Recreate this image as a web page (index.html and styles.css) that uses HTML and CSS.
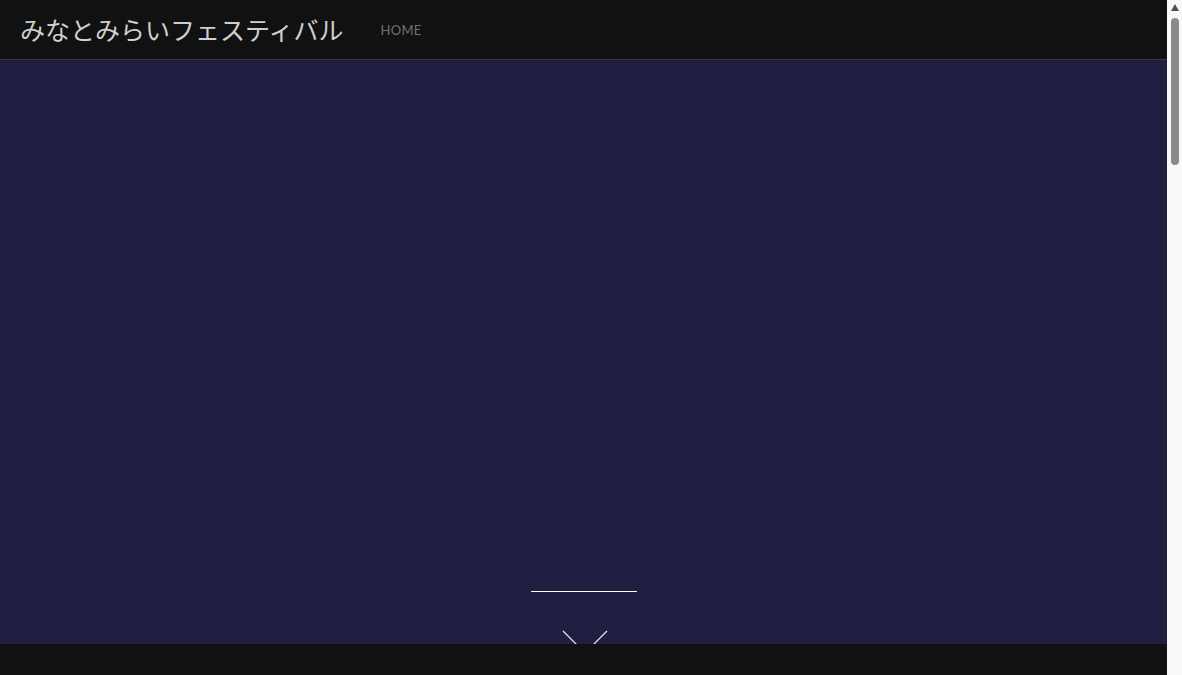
FILE: index.html
```html
<!DOCTYPE html>
<html lang="ja">
  <head>
    <meta charset="UTF-8" />
    <meta name="viewport" content="width=device-width, initial-scale=1.0" />
    <title>みなとみらいフェスティバル</title>
    <link rel="stylesheet" href="styles.css">
  </head>

  <body>
    <header class="header">
      <a class="brand" href="#">みなとみらいフェスティバル</a>
      <nav class="nav">
        <a href="#">HOME</a>
      </nav>
    </header>

    <section class="hero">
      <div class="scroll-hint">
        <div class="rule"></div>
        <svg class="chevron" width="46" height="24" viewBox="0 0 46 24">
          <polyline points="1,1 23,23 45,1" fill="none" stroke="#ececf6" stroke-width="1.2" />
        </svg>
      </div>
    </section>

    <section class="content"></section>

    <!-- window scrollbar -->
    <div class="scrollbar">
      <span class="scroll-up"></span>
      <span class="scroll-thumb"></span>
    </div>
  </body>
</html>
```

FILE: styles.css
```css
* {
  margin: 0;
  padding: 0;
  box-sizing: border-box;
}

html {
  background: #111;
}

body {
  margin-right: 15px;
  font-family: "Lato", "Noto Sans CJK JP", sans-serif;
}

a {
  text-decoration: none;
}

.header {
  height: 60px;
  display: flex;
  align-items: center;
  gap: 36px;
  padding: 0 20px;
  background: #111;
  border-bottom: 1px solid #38383d;
}

.brand {
  font-family: "Noto Sans CJK JP", sans-serif;
  font-size: 25px;
  line-height: 1;
  color: #cfcfcf;
  margin-top: -1px;
}

.nav a {
  display: block;
  margin-left: 1px;
  font-size: 13px;
  color: #727272;
  letter-spacing: 0.3px;
}

.hero {
  height: 584px;
  background: #1f1f42;
  display: flex;
  flex-direction: column;
  align-items: center;
  justify-content: flex-end;
  overflow: hidden;
}

.scroll-hint {
  display: flex;
  flex-direction: column;
  align-items: center;
  margin-bottom: -10px;
}

.rule {
  width: 106px;
  height: 1px;
  background: #fff;
}

.chevron {
  display: block;
  margin-top: 38px;
  margin-left: 3px;
}

.content {
  height: 2330px;
  background: #111;
}

.scrollbar {
  position: fixed;
  top: 0;
  right: 0;
  width: 15px;
  height: 100%;
  background: #f9f9f9;
  display: flex;
  flex-direction: column;
  align-items: center;
}

.scroll-up {
  margin-top: 4px;
  width: 0;
  height: 0;
  border-left: 4px solid transparent;
  border-right: 4px solid transparent;
  border-bottom: 7px solid #505050;
}

.scroll-thumb {
  margin-top: 7px;
  width: 8px;
  height: 147px;
  border-radius: 4px;
  background: #8a8a8a;
}
```
